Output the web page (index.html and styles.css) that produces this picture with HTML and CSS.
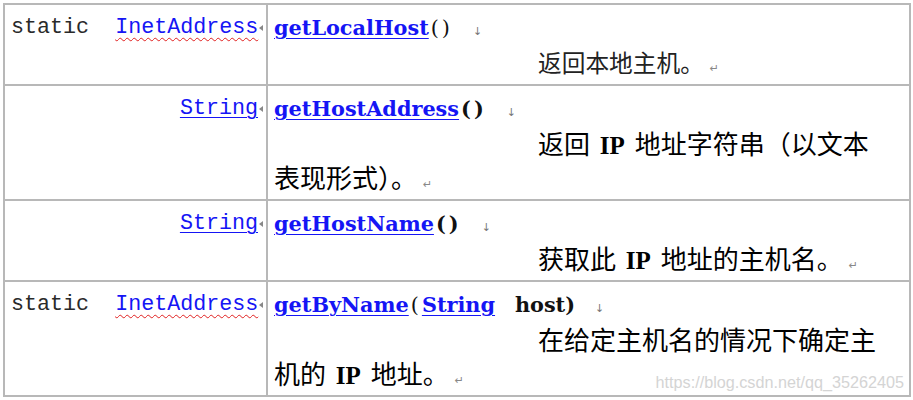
FILE: index.html
```html
<!DOCTYPE html>
<html>
<head>
  <title>InetAddress</title>
  <link rel="stylesheet" href="styles.css">
</head>
<body>
  <div class="page">
    <table class="api">
      <colgroup>
        <col class="col-type">
        <col>
      </colgroup>
      <tbody>
        <tr>
          <td class="type">static&nbsp; <a class="link typo">InetAddress</a><span class="cell-mark"></span></td>
          <td class="member">
            <div class="sig"><a class="method">getLocalHost</a><span class="paren">()</span><span class="br-mark">↓</span></div>
            <p class="desc first">返回本地主机。<span class="pm">↵</span></p>
          </td>
        </tr>
        <tr>
          <td class="type"><a class="link">String</a><span class="cell-mark"></span></td>
          <td class="member">
            <div class="sig"><a class="method">getHostAddress</a><span class="paren bold">()</span><span class="br-mark">↓</span></div>
            <p class="desc">返回 <b class="lat">IP</b> 地址字符串（以文本表现形式）。<span class="pm">↵</span></p>
          </td>
        </tr>
        <tr>
          <td class="type"><a class="link">String</a><span class="cell-mark"></span></td>
          <td class="member">
            <div class="sig"><a class="method">getHostName</a><span class="paren bold">()</span><span class="br-mark">↓</span></div>
            <p class="desc">获取此 <b class="lat">IP</b> 地址的主机名。<span class="pm">↵</span></p>
          </td>
        </tr>
        <tr>
          <td class="type">static&nbsp; <a class="link typo">InetAddress</a><span class="cell-mark"></span></td>
          <td class="member">
            <div class="sig"><a class="method">getByName</a><span class="paren">(</span><a class="method">String</a>&nbsp;&nbsp; <span class="arg">host)</span><span class="br-mark">↓</span></div>
            <p class="desc">在给定主机名的情况下确定主机的 <b class="lat">IP</b> 地址。<span class="pm">↵</span></p>
          </td>
        </tr>
      </tbody>
    </table>

    <div class="watermark">https://blog.csdn.net/qq_35262405</div>
  </div>
</body>
</html>
```

FILE: styles.css
```css
body {
  margin: 0;
  padding: 0;
  background-color: #fff;
}

.page {
  position: relative;
  width: 913px;
  height: 400px;
  padding: 3px 0 0 3px;
  box-sizing: border-box;
  overflow: hidden;
}

.api {
  width: 908px;
  border-collapse: collapse;
  table-layout: fixed;
}

.col-type {
  width: 263px;
}

.api td {
  border: 2px solid #b8b8b8;
  vertical-align: top;
  line-height: 34px;
  padding: 6px 22px 5px 6px;
}

.type {
  text-align: right;
  font-family: "Liberation Mono", monospace;
  font-size: 21.7px;
  color: #2a2a2a;
  padding-right: 3px !important;
  white-space: nowrap;
}

.link {
  color: #1515f5;
  text-decoration: underline;
  text-decoration-thickness: 1px;
  text-underline-offset: 3px;
}

.typo {
  text-decoration: underline wavy #e02020;
  text-decoration-thickness: 1px;
  text-underline-offset: 4px;
}

.cell-mark {
  display: inline-block;
  width: 0;
  height: 0;
  margin-left: 1px;
  border-top: 3px solid transparent;
  border-bottom: 3px solid transparent;
  border-right: 4px solid #888;
  vertical-align: 2px;
}

.sig {
  font-family: "DejaVu Serif", serif;
  font-size: 20.8px;
  color: #111;
  white-space: nowrap;
}

.method {
  color: #1515f5;
  font-weight: bold;
  text-decoration: underline;
  text-decoration-thickness: 1px;
  text-underline-offset: 3px;
}

.paren {
  font-weight: normal;
  letter-spacing: 3px;
  margin-left: 2px;
}

.paren.bold,
.arg {
  font-weight: bold;
}

.br-mark {
  font-family: "DejaVu Sans", sans-serif;
  font-size: 11px;
  line-height: 1;
  color: #777;
  margin-left: 20px;
}

.desc {
  margin: 0;
  text-indent: 264px;
  font-family: "Noto Sans CJK SC", sans-serif;
  font-size: 26px;
  color: #000;
}

.desc.first {
  font-size: 23.7px;
  color: #222;
}

.lat {
  font-family: "Liberation Serif", serif;
  font-weight: bold;
  font-size: 25px;
  line-height: 1;
  margin: 0 4px;
}

.pm {
  font-family: "DejaVu Sans", sans-serif;
  font-size: 11px;
  line-height: 1;
  color: #888;
  margin-left: 6px;
}

.watermark {
  position: absolute;
  right: 9px;
  bottom: 8px;
  font-family: "Liberation Sans", Arial, sans-serif;
  font-size: 16.2px;
  color: #d4d4d4;
}
```
